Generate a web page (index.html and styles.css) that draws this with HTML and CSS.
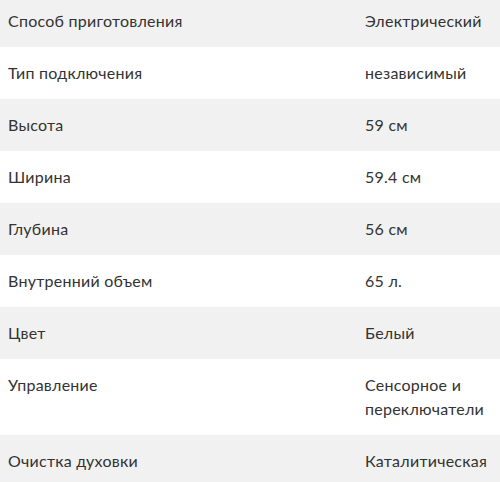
FILE: index.html
```html
<!DOCTYPE html>
<html lang="ru">
<head>
<meta charset="utf-8">
<link rel="stylesheet" href="styles.css">
</head>
<body>
<div class="specs">
  <div class="row"><div class="name">Способ приготовления</div><div class="value">Электрический</div></div>
  <div class="row"><div class="name">Тип подключения</div><div class="value">независимый</div></div>
  <div class="row"><div class="name">Высота</div><div class="value">59 см</div></div>
  <div class="row"><div class="name">Ширина</div><div class="value">59.4 см</div></div>
  <div class="row"><div class="name">Глубина</div><div class="value">56 см</div></div>
  <div class="row"><div class="name">Внутренний объем</div><div class="value">65 л.</div></div>
  <div class="row"><div class="name">Цвет</div><div class="value">Белый</div></div>
  <div class="row"><div class="name">Управление</div><div class="value">Сенсорное и переключатели</div></div>
  <div class="row"><div class="name">Очистка духовки</div><div class="value">Каталитическая</div></div>
</div>
</body>
</html>
```
FILE: styles.css
```css
html, body {
  margin: 0;
  padding: 0;
  background: #fff;
}
body {
  font-family: Lato, "Noto Sans", sans-serif;
  font-size: 16px;
  line-height: 24px;
  letter-spacing: 0.25px;
  color: #333;
  overflow: hidden;
}
.specs {
  margin-top: -5px;
}
.row {
  display: grid;
  grid-template-columns: 349px 1fr;
  column-gap: 8px;
  padding: 14px 8px;
}
.row:nth-child(odd) {
  background: #f1f1f1;
}
```
